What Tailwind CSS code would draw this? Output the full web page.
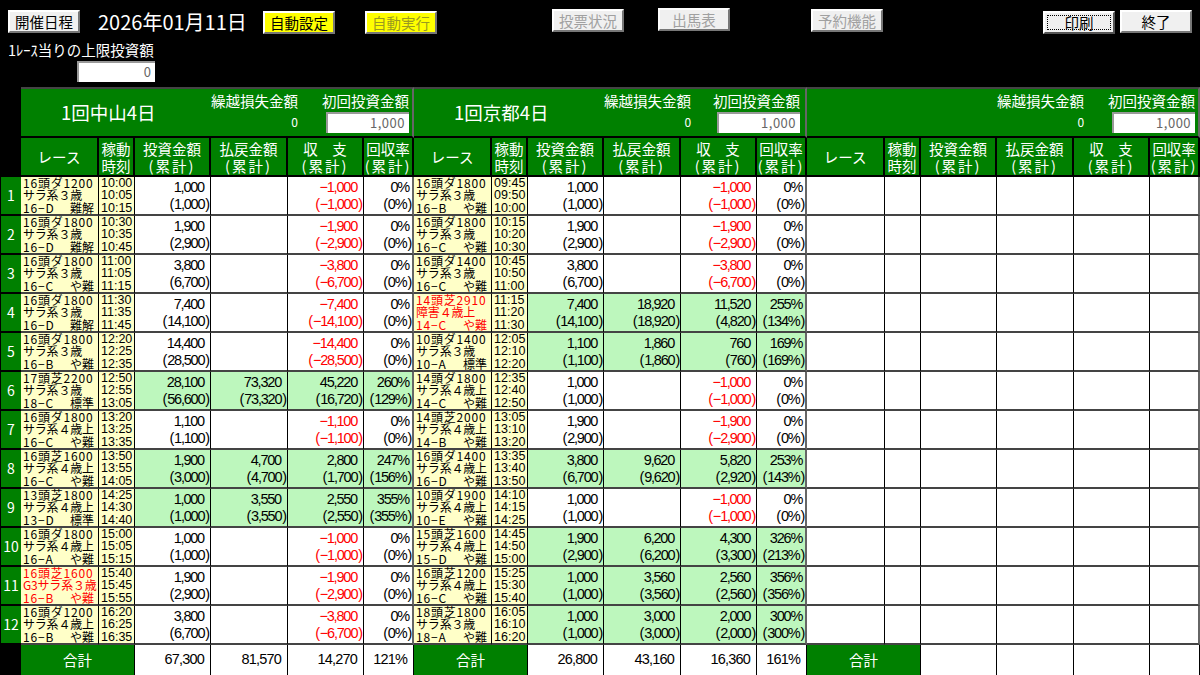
<!DOCTYPE html>
<html lang="ja">

<head>
    <meta charset="UTF-8" />
    <title>開催日程</title>
    <script src="https://cdn.jsdelivr.net/npm/@tailwindcss/browser@4"></script>
</head>

<body class="bg-black w-[1200px] h-[675px] overflow-hidden font-['Noto_Sans_CJK_JP',sans-serif] text-black">
    <!-- toolbar -->
    <div class="h-[87px] relative">
        <div class="flex items-start h-[50px] pt-[8px]">
            <div class="ml-[8px] mt-[2px] w-[72px] h-[23px] flex items-center justify-center text-[14.5px] bg-[#f0f0f0] border-2 border-t-white border-l-white border-r-[#777] border-b-[#777]">開催日程</div>
            <div class="ml-[18px] w-[150px] text-white text-[20px] leading-[28px] whitespace-nowrap">2026年01月11日</div>
            <div class="ml-[15px] mt-[3px] w-[72px] h-[23px] flex items-center justify-center text-[14.5px] bg-[#ffff00] border-2 border-t-white border-l-white border-r-[#777] border-b-[#777]">自動設定</div>
            <div class="ml-[30px] mt-[3px] w-[72px] h-[23px] flex items-center justify-center text-[14.5px] text-[#9a9a20] bg-[#ffff00] border-2 border-t-white border-l-white border-r-[#777] border-b-[#777]">自動実行</div>
            <div class="ml-[115px] mt-[1px] w-[72px] h-[23px] flex items-center justify-center text-[14.5px] text-[#a0a0a0] bg-[#f0f0f0] border-2 border-t-white border-l-white border-r-[#777] border-b-[#777]">投票状況</div>
            <div class="ml-[34px] w-[72px] h-[23px] flex items-center justify-center text-[14.5px] text-[#a0a0a0] bg-[#f0f0f0] border-2 border-t-white border-l-white border-r-[#777] border-b-[#777]">出馬表</div>
            <div class="ml-[81px] mt-[1px] w-[72px] h-[23px] flex items-center justify-center text-[14.5px] text-[#a0a0a0] bg-[#f0f0f0] border-2 border-t-white border-l-white border-r-[#777] border-b-[#777]">予約機能</div>
            <div class="ml-[160px] mt-[3px] w-[72px] h-[23px] p-[2px] bg-[#f0f0f0] border-2 border-t-white border-l-white border-r-[#555] border-b-[#555]">
                <div class="h-full flex items-center justify-center text-[14.5px] border border-dotted border-black">印刷</div>
            </div>
            <div class="ml-[5px] mt-[2px] w-[72px] h-[23px] flex items-center justify-center text-[14.5px] bg-[#f0f0f0] border-2 border-t-white border-l-white border-r-[#777] border-b-[#777]">終了</div>
        </div>
        <div class="pl-[8px] text-white text-[14.5px] leading-[14px] mt-[-7px]">1ﾚｰｽ当りの上限投資額</div>
        <div class="ml-[77px] mt-[4px] w-[78px] h-[21px] bg-white border-l-2 border-t-2 border-l-[#999] border-t-[#999] text-right pr-[4px] text-[13px] leading-[18px] text-[#666]">0</div>
    </div>

    <table class="table-fixed w-[1200px] border-separate border-spacing-0">
        <colgroup id="cols"></colgroup>
        <tbody id="table-body"></tbody>
    </table>

    <script>
        const widths = [21, 78, 36, 76, 77, 76, 50, 78, 36, 76, 77, 76, 50, 78, 36, 76, 77, 76, 50];
        document.getElementById('cols').innerHTML = widths.map(w => `<col style="width:${w}px">`).join('');

        const D = 'サラ系３歳', U = 'サラ系４歳上';
        // [line1, line2, grade, difficulty, times, bet, betTotal, pay, payTotal, bal, balTotal, rate, rateTotal, red]
        const venues = [
            {
                name: '1回中山4日', gap: 'ml-[24px]', total: ['67,300', '81,570', '14,270', '121%'], rows: [
                    ['16頭ダ1200', D, '16-D', '難解', ['10:00', '10:05', '10:15'], '1,000', '(1,000)', '', '', '-1,000', '(-1,000)', '0%', '(0%)'],
                    ['16頭ダ1800', D, '16-D', '難解', ['10:30', '10:35', '10:45'], '1,900', '(2,900)', '', '', '-1,900', '(-2,900)', '0%', '(0%)'],
                    ['16頭ダ1800', D, '16-C', 'や難', ['11:00', '11:05', '11:15'], '3,800', '(6,700)', '', '', '-3,800', '(-6,700)', '0%', '(0%)'],
                    ['16頭ダ1800', D, '16-D', '難解', ['11:30', '11:35', '11:45'], '7,400', '(14,100)', '', '', '-7,400', '(-14,100)', '0%', '(0%)'],
                    ['16頭ダ1800', D, '16-B', 'や難', ['12:20', '12:25', '12:35'], '14,400', '(28,500)', '', '', '-14,400', '(-28,500)', '0%', '(0%)'],
                    ['17頭芝2200', D, '18-C', '標準', ['12:50', '12:55', '13:05'], '28,100', '(56,600)', '73,320', '(73,320)', '45,220', '(16,720)', '260%', '(129%)'],
                    ['16頭ダ1800', U, '16-C', 'や難', ['13:20', '13:25', '13:35'], '1,100', '(1,100)', '', '', '-1,100', '(-1,100)', '0%', '(0%)'],
                    ['16頭芝1600', U, '16-C', 'や難', ['13:50', '13:55', '14:05'], '1,900', '(3,000)', '4,700', '(4,700)', '2,800', '(1,700)', '247%', '(156%)'],
                    ['13頭芝1800', U, '13-D', '標準', ['14:25', '14:30', '14:40'], '1,000', '(1,000)', '3,550', '(3,550)', '2,550', '(2,550)', '355%', '(355%)'],
                    ['16頭ダ1800', U, '16-A', 'や難', ['15:00', '15:05', '15:15'], '1,000', '(1,000)', '', '', '-1,000', '(-1,000)', '0%', '(0%)'],
                    ['16頭芝1600', 'G3サラ系３歳', '16-B', 'や難', ['15:40', '15:45', '15:55'], '1,900', '(2,900)', '', '', '-1,900', '(-2,900)', '0%', '(0%)', true],
                    ['16頭ダ1200', U, '16-B', 'や難', ['16:20', '16:25', '16:35'], '3,800', '(6,700)', '', '', '-3,800', '(-6,700)', '0%', '(0%)'],
                ]
            },
            {
                name: '1回京都4日', gap: 'ml-[22px]', total: ['26,800', '43,160', '16,360', '161%'], rows: [
                    ['16頭ダ1800', D, '16-B', 'や難', ['09:45', '09:50', '10:00'], '1,000', '(1,000)', '', '', '-1,000', '(-1,000)', '0%', '(0%)'],
                    ['16頭ダ1800', D, '16-C', 'や難', ['10:15', '10:20', '10:30'], '1,900', '(2,900)', '', '', '-1,900', '(-2,900)', '0%', '(0%)'],
                    ['16頭ダ1400', D, '16-C', 'や難', ['10:45', '10:50', '11:00'], '3,800', '(6,700)', '', '', '-3,800', '(-6,700)', '0%', '(0%)'],
                    ['14頭芝2910', '障害４歳上', '14-C', 'や難', ['11:15', '11:20', '11:30'], '7,400', '(14,100)', '18,920', '(18,920)', '11,520', '(4,820)', '255%', '(134%)', true],
                    ['10頭ダ1400', D, '10-A', '標準', ['12:05', '12:10', '12:20'], '1,100', '(1,100)', '1,860', '(1,860)', '760', '(760)', '169%', '(169%)'],
                    ['14頭ダ1800', U, '14-C', 'や難', ['12:35', '12:40', '12:50'], '1,000', '(1,000)', '', '', '-1,000', '(-1,000)', '0%', '(0%)'],
                    ['14頭芝2000', U, '14-B', 'や難', ['13:05', '13:10', '13:20'], '1,900', '(2,900)', '', '', '-1,900', '(-2,900)', '0%', '(0%)'],
                    ['16頭ダ1400', U, '16-D', 'や難', ['13:35', '13:40', '13:50'], '3,800', '(6,700)', '9,620', '(9,620)', '5,820', '(2,920)', '253%', '(143%)'],
                    ['10頭ダ1900', U, '10-E', 'や難', ['14:10', '14:15', '14:25'], '1,000', '(1,000)', '', '', '-1,000', '(-1,000)', '0%', '(0%)'],
                    ['15頭芝1600', U, '15-D', 'や難', ['14:45', '14:50', '15:00'], '1,900', '(2,900)', '6,200', '(6,200)', '4,300', '(3,300)', '326%', '(213%)'],
                    ['16頭芝1200', U, '16-C', 'や難', ['15:25', '15:30', '15:40'], '1,000', '(1,000)', '3,560', '(3,560)', '2,560', '(2,560)', '356%', '(356%)'],
                    ['18頭芝1800', D, '18-A', 'や難', ['16:05', '16:10', '16:20'], '1,000', '(1,000)', '3,000', '(3,000)', '2,000', '(2,000)', '300%', '(300%)'],
                ]
            },
            { name: '', gap: 'ml-[24px]', total: null, rows: [] },
        ];

        const edge = 'border-r border-b-2 border-r-black border-b-[#444] p-0';
        const last = 'border-r-2 border-b-2 border-r-[#666] border-b-[#444] p-0';
        const head = 'border-r-2 border-b-2 border-r-black border-b-black bg-[#008000] text-white text-center text-[14.5px] leading-[17px] font-normal p-0';
        const numFont = "font-['Liberation_Sans','Noto_Sans_CJK_JP',sans-serif]";
        const cum = '<span class="tracking-[2px]">(累計)</span>';

        function title(v) {
            return `<td colspan="6" class="h-[51px] bg-[#008000] border-t-2 border-t-[#444] border-r-2 border-r-[#666] border-b-2 border-b-black p-0 text-white">
                <div class="flex h-full">
                    <div class="w-[189px] pt-[11px] pl-[40px] text-[18.5px] leading-[24px] whitespace-nowrap">${v.name}</div>
                    <div class="w-[88px] pt-[3px] text-[14.5px] leading-[18px] flex flex-col items-end whitespace-nowrap">繰越損失金額<div class="text-[12px] mt-[3px]">0</div></div>
                    <div class="${v.gap} w-[88px] pt-[3px] text-[14.5px] leading-[18px] whitespace-nowrap">初回投資金額
                        <div class="ml-[4px] mt-[2px] w-[83px] h-[21px] bg-white border-l-2 border-t-2 border-l-[#999] border-t-[#999] text-right pr-[4px] text-[13px] leading-[18px] tracking-[0.5px] text-[#666]">1,000</div>
                    </div>
                </div>
            </td>`;
        }

        function headers() {
            return `<th class="${head}">レース</th><th class="${head}">稼動<br>時刻</th><th class="${head}">投資金額<br>${cum}</th><th class="${head}">払戻金額<br>${cum}</th><th class="${head}">収　支<br>${cum}</th><th class="${head} border-r-[#666]">回収率<br>${cum}</th>`;
        }

        // parens are wider in the original font
        function fmt(s) {
            if (!s) return '&nbsp;';
            return s.replace('-', '−')
                .replace('(', '<span class="px-[1px]">(</span>')
                .replace(')', '<span class="px-[1px]">)</span>');
        }

        function money(a, b, cls, tail) {
            const pad = tail ? 'pr-[3px]' : 'pr-[6px]';
            return `<td class="${tail ? last : edge} ${cls} ${numFont} pt-[1px] text-right text-[14.5px] leading-[17px] tracking-[-1.2px] whitespace-nowrap">
                <div class="${pad}">${fmt(a)}</div><div>${fmt(b)}</div></td>`;
        }

        function raceCells(r) {
            if (!r) {
                return Array.from({ length: 6 }, (_, i) => `<td class="${i === 5 ? last : edge} bg-white"></td>`).join('');
            }
            const color = r[13] ? 'text-[#ff0000]' : 'text-black';
            const win = r[7] !== '';
            const bg = win ? 'bg-[#bdf7bd]' : 'bg-white';
            const balColor = win ? 'text-black' : 'text-[#ff0000]';
            return `<td class="${edge} bg-[#ffffc8] ${color} text-[12px] leading-[12.3px] pl-[2px] whitespace-nowrap">
                    <div class="tracking-[0.8px]">${r[0]}</div><div class="tracking-[-0.2px]">${r[1]}</div><div class="flex justify-between pr-[4px]"><span class="tracking-[0.8px]">${r[2].replace('-', '−')}</span><span>${r[3]}</span></div></td>
                <td class="${edge} bg-[#ffffc8] ${numFont} text-[12.5px] leading-[12.3px] pl-[2px]">${r[4].join('<br>')}</td>`
                + money(r[5], r[6], bg + ' text-black')
                + money(r[7], r[8], bg + ' text-black')
                + money(r[9], r[10], bg + ' ' + balColor)
                + money(r[11], r[12], bg + ' text-black', true);
        }

        function totalCells(v) {
            const sum = `border-r border-r-black text-right pr-[6px] text-[14.5px] tracking-[-0.8px] bg-white text-black p-0 ${numFont}`;
            const label = `<td colspan="2" class="bg-[#008000] text-white text-center text-[14.5px] border-r border-r-black p-0">合計</td>`;
            if (!v.total) return label + `<td class="${sum}"></td><td class="${sum}"></td><td class="${sum}"></td><td class="${sum}"></td>`;
            return label + v.total.map((t, i) => `<td class="${sum} ${i === 3 ? 'pr-[4px]' : ''}">${t}</td>`).join('');
        }

        const tbody = document.getElementById('table-body');
        let html = `<tr><td class="p-0"></td>${venues.map(title).join('')}</tr>`;
        html += `<tr class="h-[39px]"><td class="p-0"></td>${venues.map(headers).join('')}</tr>`;
        for (let i = 0; i < 12; i++) {
            html += `<tr class="h-[39px]"><td class="p-0 bg-black"><div class="h-[37px] mb-[2px] ml-[1px] bg-[#008000] text-white text-[14px] flex items-center justify-center">${i + 1}</div></td>${venues.map(v => raceCells(v.rows[i])).join('')}</tr>`;
        }
        html += `<tr class="h-[30px]"><td class="p-0"></td>${venues.map(totalCells).join('')}</tr>`;
        tbody.innerHTML = html;
    </script>
</body>

</html>
